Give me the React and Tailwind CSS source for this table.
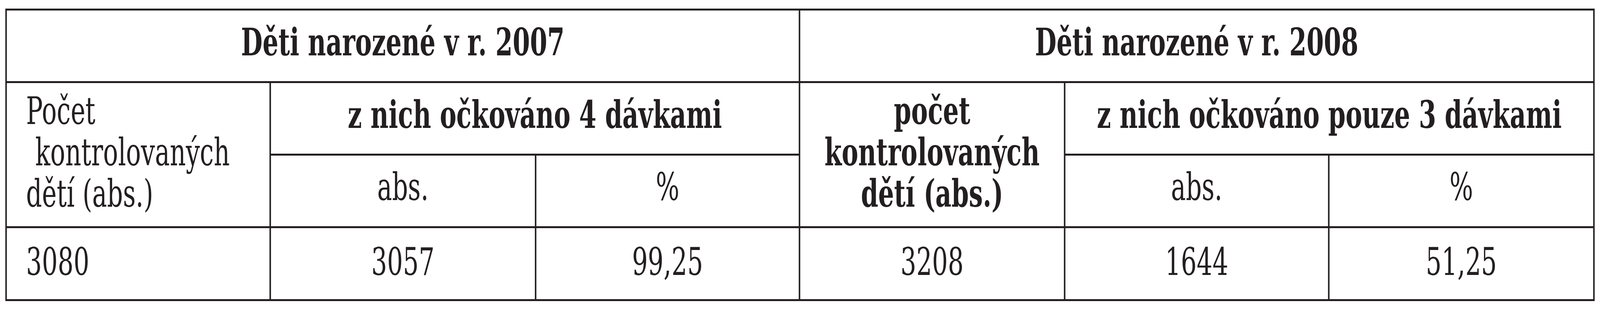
import React from "react";

function Cell({ className = "", children }) {
  return (
    <div className={"flex items-center justify-center bg-white whitespace-nowrap " + className}>
      <span>{children}</span>
    </div>
  );
}

export default function App() {
  return (
    <div className="w-[4096px] h-[800px] bg-white overflow-hidden">
      <div className="w-[6312px] h-[800px] bg-white pt-[22px] pl-[21px] origin-top-left scale-x-[0.648923]">
        <div className="grid w-fit grid-cols-[1036px_1041px_1035px_1040px_1036px_1040px] grid-rows-[181px_181px_181px_182px] gap-x-[6px] gap-y-[5px] px-[6px] py-[5px] bg-[#231f20] text-[#231f20] font-['DejaVu_Serif','Liberation_Serif',serif] text-[98px] leading-normal">
          <Cell className="col-span-3 font-bold pb-[20px]">Děti narozené v r. 2007</Cell>
          <Cell className="col-span-3 font-bold pb-[20px]">Děti narozené v r. 2008</Cell>

          <div className="row-span-2 flex flex-col justify-center bg-white pl-[76px] pb-[14px] leading-[106px] whitespace-nowrap">
            <div>Počet</div>
            <div className="pl-[36px]">kontrolovaných</div>
            <div>dětí (abs.)</div>
          </div>
          <Cell className="col-span-2 font-bold pb-[20px]">z nich očkováno 4 dávkami</Cell>
          <div className="row-span-2 flex flex-col items-center justify-center bg-white pb-[14px] leading-[106px] font-bold whitespace-nowrap">
            <div>počet</div>
            <div>kontrolovaných</div>
            <div>dětí (abs.)</div>
          </div>
          <Cell className="col-span-2 font-bold pb-[20px]">z nich očkováno pouze 3 dávkami</Cell>

          <Cell className="pb-[20px]">abs.</Cell>
          <Cell className="pb-[20px]">%</Cell>
          <Cell className="pb-[20px]">abs.</Cell>
          <Cell className="pb-[20px]">%</Cell>

          <div className="flex items-center bg-white pl-[76px] pb-[10px]">
            <span>3080</span>
          </div>
          <Cell className="pb-[10px]">3057</Cell>
          <Cell className="pb-[10px]">99,25</Cell>
          <Cell className="pb-[10px]">3208</Cell>
          <Cell className="pb-[10px]">1644</Cell>
          <Cell className="pb-[10px]">51,25</Cell>
        </div>
      </div>
    </div>
  );
}
